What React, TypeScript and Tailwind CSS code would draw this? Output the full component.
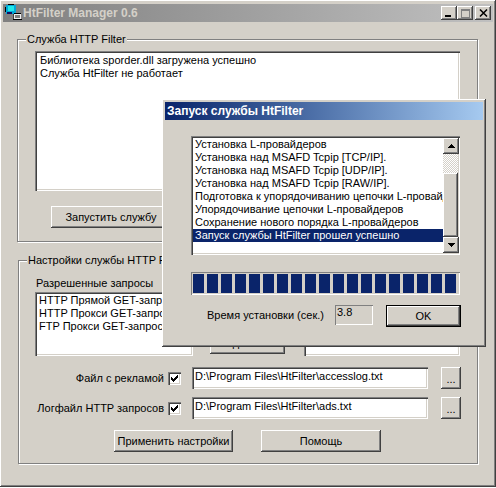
const RAISED = "bg-[#d4d0c8] shadow-[inset_-1px_-1px_#404040,inset_1px_1px_#ffffff,inset_-2px_-2px_#808080]";
const SUNKEN = "shadow-[inset_1px_1px_#808080,inset_2px_2px_#404040,inset_-1px_-1px_#ffffff,inset_-2px_-2px_#d4d0c8]";
const ETCHED = "border border-[#808080] shadow-[inset_1px_1px_#ffffff,1px_1px_#ffffff]";

function Btn({ className = "", children }: { className?: string; children?: React.ReactNode }) {
  return <div className={`${RAISED} flex items-center justify-center shrink-0 ${className}`}>{children}</div>;
}

function TitleIcon() {
  return (
    <svg width="17" height="17" viewBox="0 0 17 17" className="shrink-0" shapeRendering="crispEdges">
      <rect x="3" y="0" width="6" height="1" fill="#000" />
      <rect x="1" y="1" width="10" height="9" fill="#00a8d8" />
      <rect x="3" y="2" width="6" height="5" fill="#20e8e8" />
      <rect x="0" y="3" width="1" height="5" fill="#000" />
      <rect x="2" y="8" width="5" height="2" fill="#101060" />
      <rect x="9" y="9" width="7" height="6" fill="#f0f0f0" />
      <rect x="9" y="9" width="7" height="1" fill="#000" />
      <rect x="10" y="11" width="5" height="3" fill="#808080" />
      <rect x="8" y="15" width="9" height="1" fill="#000" />
      <rect x="8" y="10" width="1" height="5" fill="#404040" />
    </svg>
  );
}

function CaptionButtons() {
  return (
    <div className="flex items-center ml-auto mr-[2px]">
      <Btn className="w-[16px] h-[14px] items-end">
        <div className="w-[6px] h-[2px] bg-black mb-[3px] mr-[2px]" />
      </Btn>
      <Btn className="w-[16px] h-[14px]">
        <div className="w-[9px] h-[9px] border border-[#808080] border-t-2" />
      </Btn>
      <Btn className="w-[16px] h-[14px] ml-[2px]">
        <svg width="9" height="8" viewBox="0 0 9 8"><path d="M1 0.5 L8 7.5 M8 0.5 L1 7.5" stroke="#000" strokeWidth="1.5" /></svg>
      </Btn>
    </div>
  );
}

function Check() {
  return (
    <div className={`w-[13px] h-[13px] bg-white ${SUNKEN} flex items-center justify-center shrink-0`}>
      <svg width="7" height="7" viewBox="0 0 7 7" shapeRendering="crispEdges">
        <path d="M0 2h1v3h-1z M1 3h1v3h-1z M2 4h1v3h-1z M3 3h1v3h-1z M4 2h1v3h-1z M5 1h1v3h-1z M6 0h1v3h-1z" fill="#000" />
      </svg>
    </div>
  );
}

function ArrowBtn({ up, className = "" }: { up?: boolean; className?: string }) {
  return (
    <Btn className={`w-[16px] h-[16px] ${className}`}>
      <svg width="8" height="4" viewBox="0 0 8 4" shapeRendering="crispEdges">
        <path d={up ? "M4 0 L8 4 L0 4 Z" : "M0 0 L8 0 L4 4 Z"} fill="#000" />
      </svg>
    </Btn>
  );
}

function PathRow({ label, value, className = "", dotsClass = "" }: { label: string; value: string; className?: string; dotsClass?: string }) {
  return (
    <div className={`flex items-center ${className}`}>
      <div className="w-[129px] text-right whitespace-nowrap leading-[13px]">{label}</div>
      <div className="ml-[4px]"><Check /></div>
      <div className={`ml-[11px] w-[236px] h-[22px] bg-white ${SUNKEN} pl-[3px] pt-[2px] leading-[14px] whitespace-nowrap`}>{value}</div>
      <Btn className={`ml-[13px] w-[20px] h-[22px] pt-[3px] ${dotsClass}`}>...</Btn>
    </div>
  );
}

const DIALOG_ROWS = [
  "Установка L-провайдеров",
  "Установка над MSAFD Tcpip [TCP/IP].",
  "Установка над MSAFD Tcpip [UDP/IP].",
  "Установка над MSAFD Tcpip [RAW/IP].",
  "Подготовка к упорядочиванию цепочки L-провайдеров",
  "Упорядочивание цепочки L-провайдеров",
  "Сохранение нового порядка L-провайдеров",
  "Запуск службы HtFilter прошел успешно",
];

function Dialog() {
  return (
    <div className={`absolute left-[162px] top-[99px] w-[324px] h-[248px] ${RAISED} p-[3px]`}>
      <div className="h-[18px] bg-gradient-to-r from-[#0a246a] to-[#a6caf0] text-white font-bold text-[12px] flex items-center pl-[2px] whitespace-nowrap">
        Запуск службы HtFilter
      </div>
      <div className={`ml-[26px] mt-[16px] w-[269px] h-[119px] bg-white ${SUNKEN} p-[2px] flex`}>
        <div className="w-[250px] overflow-hidden">
          <div className="pt-0">
            {DIALOG_ROWS.map((r, i) => (
              <div
                key={r}
                className={`h-[13px] leading-[13px] pl-[2px] whitespace-nowrap ${i === 7 ? "bg-[#0a246a] text-white" : ""}`}
              >
                {r}
              </div>
            ))}
          </div>
        </div>
        <div className="w-[15px] flex flex-col">
          <ArrowBtn up className="w-[15px]" />
          <div className="h-[19px] bg-[repeating-conic-gradient(#ffffff_0_25%,#d4d0c8_0_50%)] bg-[length:2px_2px]" />
          <Btn className="flex-1" />
          <ArrowBtn className="w-[15px]" />
        </div>
      </div>
      <div className={`ml-[26px] mt-[17px] w-[269px] h-[23px] shadow-[inset_1px_1px_#808080,inset_-1px_-1px_#ffffff] px-[2px] py-[2px] flex gap-[3px]`}>
        {Array.from({ length: 19 }, (_, i) => (
          <div key={i} className="w-[11px] h-[19px] bg-[#0a246a] shrink-0" />
        ))}
      </div>
      <div className="flex items-start mt-[10px]">
        <div className="ml-[42px] w-[128px] mt-[3px] whitespace-nowrap leading-[14px]">Время установки (сек.)</div>
        <div className="ml-[0px] w-[38px] h-[20px] shadow-[inset_1px_1px_#808080,inset_-1px_-1px_#ffffff] pl-[2px] leading-[14px]">3.8</div>
        <div className="ml-[13px] w-[75px] h-[22px] border border-black bg-[#d4d0c8] shadow-[inset_-1px_-1px_#404040,inset_1px_1px_#ffffff,inset_-2px_-2px_#808080] flex items-center justify-center">OK</div>
      </div>
    </div>
  );
}

export default function App() {
  return (
    <div className="relative w-[496px] h-[488px] bg-white overflow-hidden text-black text-[11px] font-['Liberation_Sans',Arial,sans-serif]">
      <div className={`w-[496px] h-[487px] ${RAISED} pt-[4px] px-[3px]`}>
        <div className="h-[18px] bg-gradient-to-r from-[#808080] to-[#c0c0c0] flex items-center">
          <div className="ml-[2px] -mt-[2px]"><TitleIcon /></div>
          <span className="ml-[1px] font-bold text-[12px] text-[#d4d0c8] whitespace-nowrap">HtFilter Manager 0.6</span>
          <CaptionButtons />
        </div>

        <div className={`relative ml-[14px] mt-[17px] w-[461px] h-[203px] ${ETCHED} pl-[17px] pt-[11px]`}>
          <div className="absolute left-[8px] -top-[7px] bg-[#d4d0c8] px-[1px] leading-[13px] whitespace-nowrap">Служба HTTP Filter</div>
          <div className={`w-[425px] h-[140px] bg-white ${SUNKEN} pl-[5px] pt-[3px] leading-[13px]`}>
            <div>Библиотека sporder.dll загружена успешно</div>
            <div>Служба HtFilter не работает</div>
          </div>
          <Btn className="ml-[16px] mt-[15px] w-[120px] h-[22px]">Запустить службу</Btn>
        </div>

        <div className={`relative ml-[15px] mt-[18px] w-[460px] h-[204px] ${ETCHED} pl-[16px] pt-[16px]`}>
          <div className="absolute left-[8px] -top-[7px] bg-[#d4d0c8] px-[1px] leading-[13px] whitespace-nowrap">Настройки службы HTTP Filter</div>
          <div className="leading-[13px] pl-[1px]">Разрешенные запросы</div>
          <div className="flex items-end mt-[2px]">
            <div className={`w-[158px] h-[64px] bg-white ${SUNKEN} pl-[4px] pt-[2px] leading-[13px]`}>
              <div>HTTP Прямой GET-запрос</div>
              <div>HTTP Прокси GET-запрос</div>
              <div>FTP Прокси GET-запрос</div>
            </div>
            <Btn className="ml-[17px] mb-[2px] w-[75px] h-[22px]">Удалить</Btn>
            <div className={`ml-[19px] w-[156px] h-[64px] bg-white ${SUNKEN}`} />
          </div>
          <PathRow className="mt-[11px]" label="Файл с рекламой" value="D:\Program Files\HtFilter\accesslog.txt" />
          <PathRow className="mt-[8px]" label="Логфайл HTTP запросов" value="D:\Program Files\HtFilter\ads.txt" />
          <div className="flex mt-[11px] ml-[79px]">
            <Btn className="w-[119px] h-[22px]">Применить настройки</Btn>
            <Btn className="ml-[28px] w-[120px] h-[22px]">Помощь</Btn>
          </div>
        </div>
      </div>
      <Dialog />
    </div>
  );
}
